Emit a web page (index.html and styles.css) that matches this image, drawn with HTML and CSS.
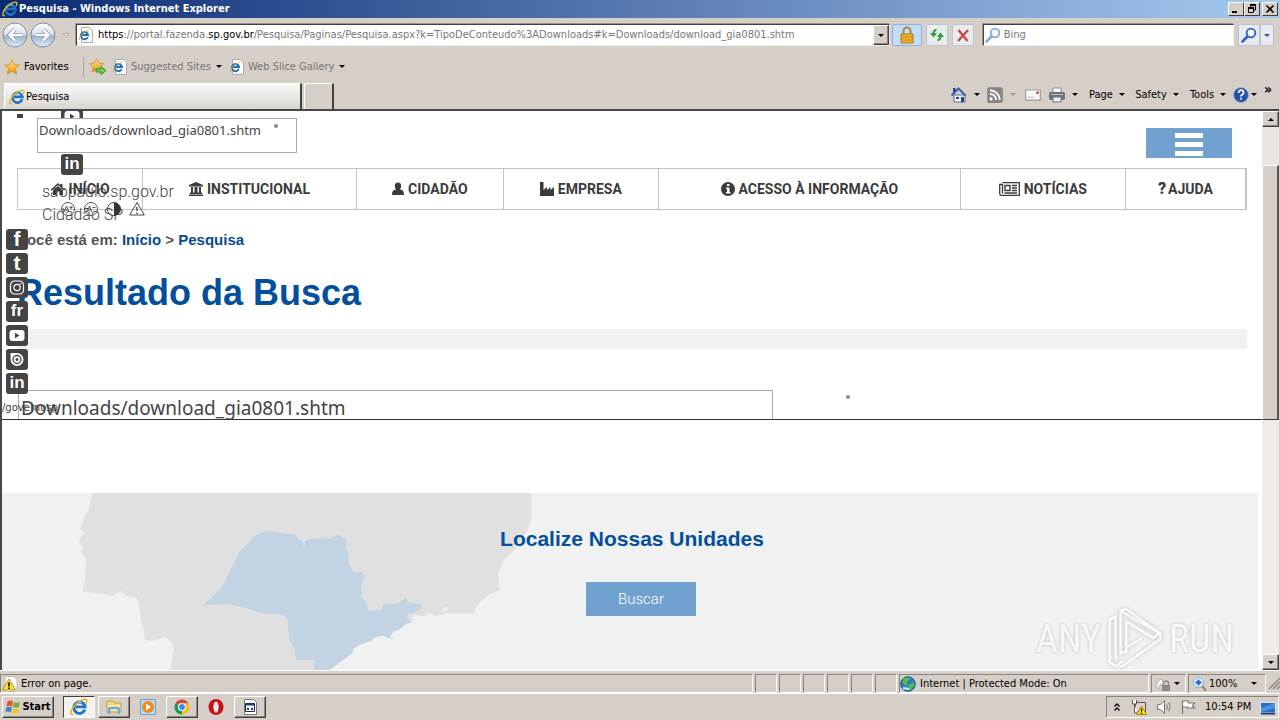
FILE: index.html
```html
<!DOCTYPE html>
<html lang="pt-BR">
<head>
<meta charset="utf-8">
<meta name="viewport" content="width=device-width, initial-scale=1">
<title>Pesquisa - Windows Internet Explorer</title>
<link rel="stylesheet" href="styles.css">
</head>
<body>
<svg class="defs" aria-hidden="true">
  <defs>
    <linearGradient id="orb" x1="0" y1="0" x2="0" y2="1"><stop offset="0" stop-color="#fff"/><stop offset=".45" stop-color="#dbe3ec"/><stop offset=".55" stop-color="#9fb4cc"/><stop offset="1" stop-color="#d8f0fb"/></linearGradient>
    <linearGradient id="gold" x1="0" y1="0" x2="0" y2="1"><stop offset="0" stop-color="#fff08a"/><stop offset="1" stop-color="#e88a12"/></linearGradient>
  </defs>
  <symbol id="ie" viewBox="0 0 16 16"><path d="M13.200 10.200A5 5 0 1 1 13.400 7.900H5" fill="none" stroke="#1f74c8" stroke-width="2.600"/><path d="M4.500 6.500a4 4 0 0 1 6-2" fill="none" stroke="#7cc7f5" stroke-width="1"/><path d="M3 14.500C0 15.500 0 12 3 8S11 .8 14 1.200C15.500 1.600 15 3.500 14.200 5" fill="none" stroke="#e6b422" stroke-width="1.400"/></symbol>
  <symbol id="iepage" viewBox="0 0 16 16"><path d="M3.500.5h8l3 3v12h-11z" fill="#fff" stroke="#aaa"/><path d="M9.800 10A3.600 3.600 0 1 1 10 8H4" fill="none" stroke="#1f6fc0" stroke-width="2"/><path d="M1.500 13C.5 11 5 4.500 10.500 3.500" fill="none" stroke="#dcae2c" stroke-width="1"/></symbol>
  <symbol id="star" viewBox="0 0 16 16"><path d="M8 .8l2.200 4.700 5.200.6-3.900 3.500 1.100 5.300L8 12.300l-4.600 2.600 1.100-5.300L.6 6.100l5.200-.6z" fill="url(#gold)" stroke="#d88c1c" stroke-width=".8"/></symbol>
  <symbol id="lens" viewBox="0 0 16 16"><path d="M1.500 14.500l5-5" stroke="currentColor" stroke-width="2.600" stroke-linecap="round"/><circle cx="10" cy="6" r="4.300" fill="#f4faff" stroke="currentColor" stroke-width="1.800"/></symbol>
  <symbol id="youtube" viewBox="0 0 21 21"><rect x="3" y="5" width="15" height="11" rx="3" fill="#fff"/><path d="M8.500 7.800v5.400l4.600-2.700z" fill="#444"/></symbol>
</svg>

<header class="titlebar">
  <svg class="i16"><use href="#ie"/></svg>
  <span class="title">Pesquisa - Windows Internet Explorer</span>
  <div class="wincontrols">
    <button aria-label="Minimize"><svg class="i10" viewBox="0 0 10 10"><path d="M1 8h5" stroke="#000" stroke-width="2"/></svg></button>
    <button aria-label="Restore"><svg class="i10" viewBox="0 0 10 10"><path d="M3.500 3V1h5v5h-2M1.500 4.500h5v4h-5z" fill="none" stroke="#000"/><path d="M3 1h6M1 4h6" stroke="#000" stroke-width="2"/></svg></button>
    <button aria-label="Close" class="close"><svg class="i10" viewBox="0 0 10 10"><path d="M1.500 1.500l7 7m0-7l-7 7" stroke="#000" stroke-width="1.600"/></svg></button>
  </div>
</header>

<div class="navbar">
  <div class="travel">
    <button aria-label="Back"><svg viewBox="0 0 26 26"><circle cx="13" cy="13" r="12" fill="url(#orb)" stroke="#7e8d9f"/><path d="M20 13H8m5-5.500L7.500 13l5.500 5.500" fill="none" stroke="#7a93ae" stroke-width="4"/><path d="M20 13H8m5-5.500L7.500 13l5.500 5.500" fill="none" stroke="#fff" stroke-width="2.600"/></svg></button>
    <button aria-label="Forward"><svg viewBox="0 0 26 26"><circle cx="13" cy="13" r="12" fill="url(#orb)" stroke="#7e8d9f"/><path d="M6 13h12m-5-5.500l5.500 5.500-5.500 5.500" fill="none" stroke="#7a93ae" stroke-width="4"/><path d="M6 13h12m-5-5.500l5.500 5.500-5.500 5.500" fill="none" stroke="#fff" stroke-width="2.600"/></svg></button>
    <button aria-label="Recent pages" class="recent"><svg class="i8" viewBox="0 0 8 8"><path d="M1 2.500h6L4 5.500z" fill="#eee" stroke="#aaa"/></svg></button>
  </div>
  <div class="address">
    <svg class="i16"><use href="#iepage"/></svg>
    <div class="url"><b>https</b>://portal.fazenda.<b>sp.gov.br</b>/Pesquisa/Paginas/Pesquisa.aspx?k=TipoDeConteudo%3ADownloads#k=Downloads/download_gia0801.shtm</div>
    <button class="raised drop" aria-label="Show addresses"><i class="caret"></i></button>
  </div>
  <button class="tool lock" aria-label="Security report"><svg class="i18" viewBox="0 0 18 18"><path d="M5.500 9V5a3.500 3.500 0 0 1 7 0v4" fill="none" stroke="#a98b3c" stroke-width="2"/><path d="M3 8h12v9H3z" fill="#f0b429" stroke="#b47b12"/><path d="M3 11h12M3 14h12" stroke="#c98a18"/></svg></button>
  <button class="tool" aria-label="Refresh"><svg class="i18" viewBox="0 0 18 18"><path d="M8.500 4Q5.500 4 5.500 8M9.500 14Q12.500 14 12.500 10" fill="none" stroke="#2e9b3a" stroke-width="2"/><path d="M2 7h7l-3.500 4.500zM9 11h7l-3.500-4.500z" fill="#2e9b3a"/></svg></button>
  <button class="tool" aria-label="Stop"><svg class="i18" viewBox="0 0 18 18"><path d="M4.500 4l9 11M14 4L4 15" stroke="#c94848" stroke-width="2.400"/></svg></button>
  <div class="bing"><svg class="i16"><use href="#lens"/></svg><input type="text" aria-label="Bing" placeholder="Bing"></div>
  <div class="go">
    <button class="tool" aria-label="Search"><svg class="i16"><use href="#lens"/></svg></button>
    <button class="tool more" aria-label="Search options"><i class="caret blue"></i></button>
  </div>
</div>

<div class="favbar">
  <button class="fav"><svg class="i16"><use href="#star"/></svg>Favorites</button>
  <button class="add" aria-label="Add to favorites bar"><svg class="i18" viewBox="0 0 18 18"><use href="#star" width="15" height="15"/><path d="M7 11h5V8.500l5 4-5 4V14H7z" fill="#6cd04f" stroke="#2d8f22"/></svg></button>
  <button class="link"><svg class="i16"><use href="#iepage"/></svg>Suggested Sites<i class="caret"></i></button>
  <button class="link"><svg class="i16"><use href="#iepage"/></svg>Web Slice Gallery<i class="caret"></i></button>
</div>

<div class="tabbar">
  <button class="tab"><svg class="i16"><use href="#ie"/></svg>Pesquisa</button>
  <button class="newtab" aria-label="New tab"></button>
  <div class="commands">
    <button aria-label="Home"><svg class="i18" viewBox="0 0 18 18"><path d="M4 9h11v7H4z" fill="#f2f6fb" stroke="#52709a"/><path d="M1.500 9.500L8.500 2.500l7 7" fill="none" stroke="#3b5da8" stroke-width="2"/><path d="M3 2h2.500v4H3z" fill="#2b3f90"/><path d="M6 11h3v2H6zM11 11h3v5h-3z" fill="#23458f"/></svg><i class="caret"></i></button>
    <button aria-label="Feeds"><svg class="i18" viewBox="0 0 16 16"><rect x="1" y="1" width="14" height="14" rx="2" fill="#858585"/><circle cx="4.500" cy="11.500" r="1.400" fill="#fff"/><path d="M3.500 7A5.500 5.500 0 0 1 9 12.500M3.500 3.800a8.700 8.700 0 0 1 8.700 8.700" fill="none" stroke="#fff" stroke-width="1.600"/></svg><i class="caret dim"></i></button>
    <button aria-label="Mail"><svg class="i18" viewBox="0 0 16 16"><path d="M1.500 3.500h13v9h-13z" fill="#fafafa" stroke="#999"/><path d="M3 10h6" stroke="#bbb"/><path d="M11 5h2v2h-2z" fill="#c23"/></svg></button>
    <button aria-label="Print"><svg class="i18" viewBox="0 0 18 18"><path d="M5 2h8v5H5z" fill="#fff" stroke="#888"/><rect x="1" y="6" width="16" height="8" rx="2" fill="#6c727a"/><path d="M3 8.500h12" stroke="#bcc3cc"/><path d="M5 11h8v5H5z" fill="#e8f0fa" stroke="#777"/></svg><i class="caret"></i></button>
    <button class="word">Page<i class="caret"></i></button>
    <button class="word">Safety<i class="caret"></i></button>
    <button class="word">Tools<i class="caret"></i></button>
    <button class="help" aria-label="Help"><svg class="i18" viewBox="0 0 18 18"><circle cx="9" cy="9" r="7.500" fill="#2450a8" stroke="#9bb0cf"/><path d="M6.500 7c0-4 5.500-3.500 5 0-.3 1.500-2.500 1.500-2.500 3.500m0 1.300v1.800" fill="none" stroke="#fff" stroke-width="1.800"/></svg><i class="caret"></i></button>
    <button class="overflow" aria-label="More commands">»</button>
  </div>
</div>

<div class="viewport">
  <div class="document">
    <section class="top">
      <div class="masthead">
        <div class="sitesearch"><input type="text" aria-label="Buscar no site" value="Downloads/download_gia0801.shtm"><i class="dot"></i></div>
        <button class="burger" aria-label="Menu"><i></i><i></i><i></i></button>
      </div>
      <nav class="menu">
        <a class="m1" href="#"><svg class="i14" viewBox="0 0 14 14"><path d="M0 7.500L7 1l2.500 2.300V2h2v3.200L14 7.500l-1 1-6-5.600-6 5.600zM2 8.500l5-4.600 5 4.600V13H8.500V9.500h-3V13H2z" fill="currentColor"/></svg>INÍCIO</a>
        <a class="m2" href="#"><svg class="i14" viewBox="0 0 14 14"><path d="M7 0l7 3v1.500H0V3zM2 5h2v5.500h1.500V5h3v5.500H10V5h2v5.500h1V12H1v-1.500h1zM0 12.500h14V14H0z" fill="currentColor"/></svg>INSTITUCIONAL</a>
        <a class="m3" href="#"><svg class="i12" viewBox="0 0 12 14"><path d="M6 .5c4.500 0 3.500 6 1.500 7C10.500 7.500 12 9 12 13H0c0-4 1.500-5.500 4.500-5.500-2-1-3-7 1.500-7z" fill="currentColor"/></svg>CIDADÃO</a>
        <a class="m4" href="#"><svg class="i14" viewBox="0 0 14 14"><path d="M0 0h3.500v8L7 5v3l3.500-3v3L14 5v9H0z" fill="currentColor"/></svg>EMPRESA</a>
        <a class="m5" href="#"><svg class="i14" viewBox="0 0 14 14"><circle cx="7" cy="7" r="7" fill="currentColor"/><path d="M6 2h2.500v2H6zM5 5.500h3.500V10h1v1.500H5V10h1V7H5z" fill="#fff"/></svg>ACESSO À INFORMAÇÃO</a>
        <a class="m6" href="#"><svg class="paper" viewBox="0 0 21 14"><path d="M3.500.7h16.800v12.600H2.500C1 13.300.7 12.500.7 11.500V2.500h2.800v9" fill="none" stroke="currentColor" stroke-width="1.300"/><path d="M6 3.500h5v5H6zM13 3.500h5M13 6h5M13 8.500h5M5.500 11H18" fill="none" stroke="currentColor" stroke-width="1.400"/></svg>NOTÍCIAS</a>
        <a class="m7" href="#"><b class="question">?</b>AJUDA</a>
      </nav>
      <p class="crumbs">Você está em: <a href="#">Início</a> &gt; <a href="#">Pesquisa</a></p>
      <h1>Resultado da Busca</h1>
      <div class="band"></div>
      <div class="results"><input type="text" aria-label="Pesquisa" value="Downloads/download_gia0801.shtm"><i class="dot"></i></div>

      <div class="govlinks"><a href="#">saopaulo.sp.gov.br</a><a href="#">Cidadão SP</a></div>
      <div class="access">
        <svg class="i16" viewBox="0 0 16 16"><circle cx="8" cy="8" r="6.500" fill="none" stroke="#555"/><path d="M4 11l2.500-6L9 11M5 9h3M9.500 6.500h3M11 5v3" fill="none" stroke="#555"/></svg>
        <svg class="i16" viewBox="0 0 16 16"><circle cx="8" cy="8" r="6.500" fill="none" stroke="#555"/><path d="M4 11l2.500-6L9 11M5 9h3M9.500 6.500h3" fill="none" stroke="#555"/></svg>
        <svg class="i16" viewBox="0 0 16 16"><circle cx="8" cy="8" r="6.500" fill="none" stroke="#444"/><path d="M8 1.500a6.500 6.500 0 0 1 0 13z" fill="#333"/></svg>
        <svg class="i16" viewBox="0 0 16 16"><path d="M8 1.500L15.300 14H.7z" fill="none" stroke="#444"/><path d="M8 6v4m0 1.500V13" stroke="#444" stroke-width="1.400"/></svg>
      </div>
      <div class="clipped"><i class="bullet"></i><a class="soc" href="#" aria-label="YouTube"><svg viewBox="0 0 21 21"><use href="#youtube"/></svg></a></div>
      <a class="soc lone" href="#">in</a>
      <div class="social">
        <a class="soc big" href="#">f</a>
        <a class="soc big" href="#">t</a>
        <a class="soc" href="#" aria-label="Instagram"><svg viewBox="0 0 21 21"><rect x="4" y="4" width="13" height="13" rx="4" fill="none" stroke="#fff" stroke-width="1.200"/><circle cx="10.500" cy="10.500" r="3.200" fill="none" stroke="#fff" stroke-width="1.200"/><circle cx="14.300" cy="6.800" r=".8" fill="#fff"/></svg></a>
        <a class="soc" href="#">fr</a>
        <a class="soc" href="#" aria-label="YouTube"><svg viewBox="0 0 21 21"><use href="#youtube"/></svg></a>
        <a class="soc" href="#" aria-label="Issuu"><svg viewBox="0 0 21 21"><path d="M4 4h6.500A6.500 6.500 0 1 1 4 10.500z" fill="#fff"/><circle cx="10.500" cy="10.500" r="4" fill="none" stroke="#444" stroke-width="1.300"/><circle cx="10.500" cy="10.500" r="1.500" fill="#444"/></svg></a>
        <a class="soc" href="#">in</a>
      </div>
      <span class="handle">/governosp</span>
    </section>

    <section class="units">
      <svg class="map" viewBox="6 24 1500 531" preserveAspectRatio="none" aria-hidden="true">
        <path d="M259 24L249 72 236 98 225 132 238 142 228 153 220 172 232 187 229 208 241 219 240 264 232 320 294 327 317 332 338 318 357 334 383 337 391 370 395 407 402 433 407 465 423 468 441 464 463 455 481 473 487 490 477 555 920 555 990 490 1050 455 1095 452 1110 430 1150 408 1160 389 1187 394 1203 384 1217 393 1255 384 1327 385 1333 365 1362 332 1398 315 1394 268 1410 225 1440 195 1475 140 1487 105V24z" fill="#e0e0e0"/>
        <path d="M570 360L608 322 625 300 640 267 653 240 670 202 712 152 748 138 830 150 835 163 852 168 875 162 910 158 920 162 948 150 969 165 968 190 976 208 975 232 989 261 1012 261 1022 272 1012 299 1012 338 1026 350 1031 378 1065 376 1074 357 1109 357 1136 340 1145 352 1179 358 1179 368 1165 382 1142 386 1138 400 1155 412 1136 418 1118 434 1098 440 1094 453 1106 463 1087 459 1069 451 1048 458 1038 469 1014 476 990 490 988 503 950 533 922 555H879V526H829L825 492 810 468 806 405 793 390 730 385 688 368 640 357z" fill="#c2d4e3"/>
        <path d="M851 162v24M1092 449l13 15M1104 449l-10 10M1242 368l12-1-8 14z" fill="#f2f2f2" stroke="#e9edf0" stroke-width="3"/>
      </svg>
      <h2>Localize Nossas Unidades</h2>
      <button class="buscar">Buscar</button>
      <div class="watermark" aria-hidden="true"><span>ANY</span>
        <svg viewBox="0 0 60 64"><path d="M4 12v44l6 4 8-5M4 12l6-3v44M15 3v44l6-3V14l28 17 6-5zM15 3l5-2 36 25v6L20 58l-8 4M21 47v-6l16-10" fill="none" stroke="#fff" stroke-width="2"/></svg>
        <span>RUN</span></div>
    </section>
  </div>
  <div class="scrollbar">
    <button class="raised" aria-label="Scroll up"><i class="caret up"></i></button>
    <div class="gap"></div>
    <div class="thumb"></div>
    <div class="rest"></div>
    <button class="raised" aria-label="Scroll down"><i class="caret"></i></button>
  </div>
</div>

<div class="statusbar">
  <div class="cell message"><svg class="i16" viewBox="0 0 16 16"><path d="M3 .5h9l3 3v12H3z" fill="#fff" stroke="#bbb"/><path d="M7 3l6.500 11H.5z" fill="#ffe02e" stroke="#b59400"/><path d="M7 6.500v4m0 1v1.500" stroke="#000" stroke-width="1.600"/></svg>Error on page.</div>
  <div class="cell mini"></div><div class="cell mini"></div><div class="cell mini"></div><div class="cell mini"></div><div class="cell mini"></div><div class="cell mini"></div>
  <div class="cell zone"><svg class="i16" viewBox="0 0 16 16"><circle cx="8" cy="8" r="7.300" fill="#2d7cc9" stroke="#23598e"/><path d="M3 3c3-2 6-2 7 0L7 6l1 3-3 1-2-3zM9 9l5-3 .5 3-3.500 5-3 .5z" fill="#4fbf4a"/><path d="M3 12l6 1" stroke="#d8f2ff" stroke-width="2"/></svg>Internet | Protected Mode: On</div>
  <div class="cell privacy"><svg class="i16" viewBox="0 0 16 16"><path d="M1 11c0-4 3-8 6-8l2 5-4 1-1 4z" fill="#f3f3f3" stroke="#aaa"/><path d="M8.500 9V7.500a2.500 2.500 0 0 1 5 0V9" fill="none" stroke="#888" stroke-width="1.400"/><path d="M7 9h8v6H7z" fill="#888"/></svg><i class="caret"></i></div>
  <div class="cell zoom"><svg class="i16" viewBox="0 0 16 16"><path d="M10 10l4 4.500" stroke="#a88664" stroke-width="2.600"/><circle cx="6.500" cy="6.500" r="5" fill="#e9f4ff" stroke="#7faedb"/><path d="M6.500 3.500v6m-3-3h6" stroke="#1a5fd0" stroke-width="2"/></svg>100%<i class="caret"></i></div>
  <svg class="grip" viewBox="0 0 12 14"><path d="M1 13L12 2M5 13l7-7M9 13l3-3" stroke="#888" stroke-width="1.500"/></svg>
</div>

<footer class="taskbar">
  <button class="raised start"><svg class="i16" viewBox="0 0 16 16"><path d="M2.500 2.500q3-2 5.500 0L7 7.500q-3-1.500-5.500 0z" fill="#e8552b"/><path d="M9 3q3 1.500 6 0l-1 5q-3 1-6 0z" fill="#6fb43c"/><path d="M1.300 8.500q3-1.500 5.500 0l-1 5q-3-1.800-5.500 0z" fill="#3c83d8"/><path d="M7.800 9q3 1.500 6 0l-1 5q-3 1.500-6 0z" fill="#f4c62d"/></svg>Start</button>
  <button class="app pressed" aria-label="Internet Explorer"><svg class="i18"><use href="#ie"/></svg></button>
  <button class="raised app" aria-label="Explorer"><svg class="i18" viewBox="0 0 18 18"><path d="M2 3h6l1 2h7v9H2z" fill="#f3d777" stroke="#c7a445"/><path d="M3 7h12v6H3z" fill="#fbedae"/><path d="M4 16v-4q0-2 2-2h6q2 0 2 2v4" fill="none" stroke="#68abd8" stroke-width="2.400"/></svg></button>
  <button class="app flat" aria-label="Media Player"><svg class="i18" viewBox="0 0 18 18"><path d="M1.500 1.500h15v15h-15z" fill="#b9d9f4" stroke="#67a3d6"/><circle cx="9" cy="9" r="6" fill="#f08a1d"/><path d="M7 5.500v7l5-3.500z" fill="#fff"/></svg></button>
  <button class="raised app" aria-label="Chrome"><svg class="i18" viewBox="0 0 18 18"><path d="M9 9L2.500 5.200A7.500 7.500 0 0 1 15.500 5.300z" fill="#db4437"/><path d="M9 9V5.300h6.500A7.500 7.500 0 0 1 9 16.500z" fill="#f4c20d"/><path d="M9 9l0 7.500A7.500 7.500 0 0 1 2.500 5.200z" fill="#1a9b55"/><circle cx="9" cy="9" r="3.500" fill="#4285f4" stroke="#fff" stroke-width="1.200"/></svg></button>
  <button class="app flat" aria-label="Opera"><svg class="i18" viewBox="0 0 18 18"><ellipse cx="9" cy="9" rx="7.500" ry="8" fill="#c4141b"/><ellipse cx="9" cy="9" rx="2.600" ry="5.600" fill="#f5e8e8"/></svg></button>
  <button class="raised app" aria-label="Program"><svg class="i18" viewBox="0 0 18 18"><path d="M3.500 1.500h9l3 3v12h-12z" fill="#fff" stroke="#777"/><path d="M4.500 5.500h9v8h-9z" fill="#fff" stroke="#112a66"/><path d="M5 6.500h8" stroke="#1c3f99" stroke-width="2"/><path d="M6 10h2v2H6zM10 10h2v2h-2z" fill="#333"/></svg></button>
  <div class="tray">
    <svg class="i10" viewBox="0 0 10 10"><path d="M2.500 4.500L5 2l2.500 2.500M2.500 8.500L5 6l2.500 2.500" fill="none" stroke="#000" stroke-width="1.300"/></svg>
    <svg class="i16" viewBox="0 0 16 16"><path d="M4.500 3.500h10v9h-10z" fill="#d8d8d8" stroke="#555"/><path d="M1.500 1v4h4V1M3.500 5v9h3" fill="#fff" stroke="#555"/><path d="M10.500 7l5 8.500h-10z" fill="#ffe12b" stroke="#a88a00"/><path d="M10.500 9.500v3m0 1v1.200" stroke="#000" stroke-width="1.300"/></svg>
    <svg class="i16" viewBox="0 0 16 16"><path d="M1.500 5.500h3l4-4v13l-4-4h-3z" fill="#fff" stroke="#777"/><path d="M10.500 5.500q1.500 2.500 0 5M12.500 3.500q3 4.500 0 9" fill="none" stroke="#888" stroke-width="1.200"/></svg>
    <svg class="i16" viewBox="0 0 16 16"><path d="M2.500 15V1.500M2.500 2h6v2h6l-2 3 2 2h-7V8h-5z" fill="#fff" stroke="#777" stroke-width="1.200"/></svg>
    <time>10:54 PM</time>
    <svg class="i16" viewBox="0 0 16 16"><path d="M.5 3.500h15v10H.5z" fill="#2a6cc9" stroke="#dfe8f2"/><path d="M1 9l14-5v5L1 13z" fill="#4a95e3"/><path d="M1 14.500h14" stroke="#1d3766" stroke-width="2"/></svg>
  </div>
</footer>
</body>
</html>
```

FILE: styles.css
```css
* { box-sizing: border-box; }
body {
  margin: 0;
  height: 100vh;
  display: flex;
  flex-direction: column;
  overflow: hidden;
  background: #d6cfc7;
  color: #000;
  font: 11px/14px "DejaVu Sans Condensed", "Noto Sans", sans-serif;
}
button {
  font: inherit;
  color: inherit;
  background: none;
  border: 0;
  padding: 0;
  display: flex;
  align-items: center;
  justify-content: center;
  white-space: nowrap;
}
input { font: inherit; color: inherit; border: 0; padding: 0; background: none; min-width: 0; outline: none; }
svg { display: block; flex: none; }
a { text-decoration: none; color: inherit; }
.defs { position: absolute; width: 0; height: 0; }
.i8 { width: 8px; height: 8px; }
.i10 { width: 10px; height: 10px; }
.i12 { width: 12px; height: 14px; }
.i14 { width: 14px; height: 14px; }
.i16 { width: 16px; height: 16px; }
.i18 { width: 18px; height: 18px; }
.caret { flex: none; border: 3px solid transparent; border-top-color: #000; border-bottom: 0; }
.caret.up { border-bottom: 3px solid #000; border-top: 0; }
.caret.dim { border-top-color: #999; }
.caret.blue { border-top-color: #2557b8; }
.raised {
  background: #d6cfc7;
  border: 1px solid;
  border-color: #fff #404040 #404040 #fff;
  box-shadow: inset -1px -1px #8a857d;
}

.titlebar {
  flex: none;
  height: 18px;
  display: flex;
  align-items: center;
  padding: 0 2px;
  gap: 1px;
  background: linear-gradient(90deg, #0a2a72, #a6caf0);
}
.title { flex: 1; color: #fff; font-weight: bold; }
.wincontrols { display: flex; }
.wincontrols button { width: 16px; height: 14px; background: #d6cfc7; border: 1px solid; border-color: #fff #404040 #404040 #fff; }
.wincontrols .close { margin-left: 2px; }

.navbar { flex: none; height: 34px; display: flex; align-items: center; padding-right: 6px; }
.travel { width: 76px; display: flex; padding-left: 2px; gap: 2px; }
.travel button svg { width: 26px; height: 26px; }
.travel .recent { width: 16px; }
.travel .recent svg { width: 8px; height: 8px; }
.address, .bing {
  height: 22px;
  display: flex;
  align-items: center;
  background: #fff;
  border: 1px solid;
  border-color: #404040 #eee #eee #404040;
  box-shadow: -1px -1px #9a948c;
}
.address { flex: 814; margin-right: 2px; }
.address .i16 { margin: 0 4px 0 1px; }
.url { flex: 1; width: 0; overflow: hidden; white-space: nowrap; color: #777; }
.url b { font-weight: normal; color: #000; }
.drop { width: 16px; height: 20px; }
.tool { width: 22px; height: 22px; background: #e9ebef; border: 1px solid #b7c5d8; border-radius: 2px; margin-right: 4px; }
.lock { width: 30px; background: #c3ddf8; border-color: #8fb3de; }
.bing { flex: 250; margin: 0 4px 0 5px; color: #8aa8c8; }
.bing .i16 { margin: 0 3px 0 1px; }
.bing input { flex: 1; color: #777; }
.bing input::placeholder { color: #777; opacity: 1; }
.go { display: flex; color: #2b62c4; }
.go .tool { margin: 0; }
.go .more { width: 14px; }

.favbar { flex: none; height: 31px; display: flex; align-items: center; padding: 0 0 2px 4px; color: #777; }
.favbar .fav { width: 80px; justify-content: flex-start; gap: 4px; color: #000; border-right: 1px solid #aaa49c; height: 20px; }
.favbar .add { width: 28px; }
.favbar .link { gap: 3px; margin-right: 7px; }
.favbar .link .caret { margin-left: 2px; }

.tabbar { flex: none; height: 26px; display: flex; padding-left: 4px; }
.tab {
  width: 298px;
  justify-content: flex-start;
  padding-left: 4px;
  gap: 1px;
  background: linear-gradient(#fafafa, #d9d5cf);
  border: 1px solid #fff;
  border-right: 2px solid #404040;
  border-bottom: 0;
}
.newtab { width: 30px; margin-left: 2px; border: 1px solid #fff; border-right: 2px solid #404040; border-bottom: 0; }
.commands {
  margin-left: auto;
  display: grid;
  grid-template-columns: 36px 38px 24px 36px 46px 54px 48px 32px 16px;
  align-items: center;
  padding-bottom: 3px;
}
.commands button { gap: 6px; justify-content: flex-start; }
.commands .word { justify-content: center; }
.commands .help { gap: 1px; }
.overflow { height: 22px; align-items: flex-start; font-weight: bold; font-size: 14px; line-height: 10px; }

.viewport { flex: 1; min-height: 0; display: flex; background: #fff; border-top: 2px solid #484848; border-left: 2px solid #484848; margin-right: 1px; }
.document { flex: 1; min-width: 0; display: flex; flex-direction: column; justify-content: space-between; overflow: hidden; }
.top { position: relative; overflow: hidden; padding: 0 15px; border-bottom: 1px solid #333; font-family: "Liberation Sans", Arial, sans-serif; }
.masthead { height: 57px; padding: 7px 15px 0 20px; display: flex; justify-content: space-between; }
.sitesearch { width: 260px; height: 35px; border: 1px solid #aaa; display: flex; padding: 0 18px 0 1px; font: 13px/20px "Noto Sans", sans-serif; color: #444; }
.sitesearch input { flex: 1; height: 22px; }
.dot { flex: none; width: 4px; height: 4px; border-radius: 2px; background: #888; margin-top: 5px; }
.burger { width: 86px; height: 30px; margin-top: 10px; background: #71a1ce; flex-direction: column; gap: 4px; padding-top: 2px; }
.burger i { width: 28px; height: 5px; background: #fff; }
.menu { display: flex; height: 42px; border: 1px solid #c3c3c3; border-right-width: 2px; font: bold 14px/16px Roboto, sans-serif; color: #3b3b3b; }
.menu a { display: flex; align-items: center; justify-content: center; gap: 4px; border-left: 1px solid #c3c3c3; white-space: nowrap; }
.menu .m1 { flex: 125; border-left: 0; }
.menu .m2 { flex: 214; }
.menu .m3 { flex: 147; }
.menu .m4 { flex: 155; }
.menu .m5 { flex: 303; }
.menu .m6 { flex: 165; }
.menu .m7 { flex: 120; gap: 2px; }
.paper { width: 21px; height: 14px; }
.question { font-size: 16px; font-weight: 900; }
.crumbs { margin: 21px 0 0 1px; font-size: 15px; line-height: 18px; font-weight: bold; color: #555; }
.crumbs a { color: #0a4a94; }
h1 { margin: 22px 0 0; font-size: 36px; line-height: 44px; color: #034f9b; }
.band { height: 20px; margin-top: 14px; background: #f1f1f1; }
.results { margin: 41px 0 0 1px; height: 29px; overflow: hidden; display: grid; grid-template-columns: 755fr 401fr; column-gap: 73px; font: 19px/28px "Noto Sans", sans-serif; color: #444; }
.results input { height: 36px; border: 1px solid #aaa; padding: 0 2px; }
.govlinks { position: absolute; left: 40px; top: 69px; display: grid; font: 300 16px/23px Roboto, sans-serif; color: #444; }
.access { position: absolute; left: 58px; top: 90px; display: flex; gap: 7px; }
.clipped { position: absolute; left: 15px; top: -5px; height: 12px; width: 70px; overflow: hidden; display: flex; gap: 38px; }
.bullet { width: 6px; height: 6px; background: #444; margin-top: 8px; }
.soc { flex: none; display: block; width: 22px; height: 21px; border-radius: 3px; background: #444; color: #fff; text-align: center; font: bold 17px/20px "Liberation Sans", Arial, sans-serif; }
.soc.big { font-size: 21px; }
.soc svg { width: 22px; height: 21px; }
.lone { position: absolute; left: 59px; top: 43px; }
.social { position: absolute; left: 4px; top: 118px; display: grid; gap: 3px; }
.handle { position: absolute; left: 0; bottom: 4px; font: 10px/14px "DejaVu Sans", sans-serif; color: #444; }

.units { position: relative; height: 177px; margin-right: 4px; background: #f1f1f1; font-family: "Liberation Sans", Arial, sans-serif; display: flex; flex-direction: column; align-items: center; padding: 33px 0 0 4px; }
.map { position: absolute; left: 0; top: 0; width: 536px; height: 177px; }
h2 { position: relative; margin: 0; font-size: 21px; line-height: 26px; color: #034f9b; }
.buscar { width: 110px; height: 34px; margin: 30px 0 0 18px; background: #71a1ce; color: #fff; font: 300 15px/18px Roboto, sans-serif; }
.watermark { position: absolute; right: 24px; bottom: 0; display: flex; align-items: center; gap: 4px; color: #f8f8f8; font: 38px/58px "Roboto Condensed", "Liberation Sans Narrow", sans-serif; text-shadow: 0 0 3px #bbb; }
.watermark svg { width: 60px; height: 62px; filter: drop-shadow(0 0 2px #bbb); }

.scrollbar { width: 17px; display: flex; flex-direction: column; background: #e9e6e1; }
.scrollbar .raised { width: 17px; height: 16px; }
.gap { flex: 38; }
.thumb { flex: 255; background: #d6cfc7; border: 1px solid #fff; border-right: 2px solid #555; border-bottom: 1px solid #333; }
.rest { flex: 236; background: #eeebe8; }

.statusbar { flex: none; height: 23px; display: flex; gap: 2px; padding-top: 3px; border-top: 1px solid #fff; }
.cell { height: 19px; display: flex; align-items: center; gap: 3px; border: 1px solid; border-color: #8a857d #fff #fff #8a857d; white-space: nowrap; }
.message { flex: 1; padding-left: 1px; }
.mini { width: 22px; }
.zone { width: 250px; gap: 4px; }
.privacy { width: 35px; padding-left: 3px; }
.zoom { width: 78px; padding-left: 3px; gap: 1px; }
.zoom .caret { margin-left: auto; margin-right: 8px; }
.grip { width: 12px; height: 18px; }

.taskbar { flex: none; height: 27px; display: flex; align-items: center; border-top: 1px solid #fff; padding: 0 1px 0 2px; gap: 3px; }
.start { width: 52px; height: 22px; font-weight: bold; gap: 1px; margin-right: 6px; }
.app { width: 32px; height: 22px; }
.pressed { background: #f4f2ef; border: 1px solid; border-color: #404040 #fff #fff #404040; }
.app.flat { width: 30px; }
.tray { margin-left: auto; width: 173px; height: 22px; padding: 0 2px 0 5px; display: flex; align-items: center; justify-content: space-between; border: 1px solid; border-color: #8a857d #fff #fff #8a857d; white-space: nowrap; }
```
